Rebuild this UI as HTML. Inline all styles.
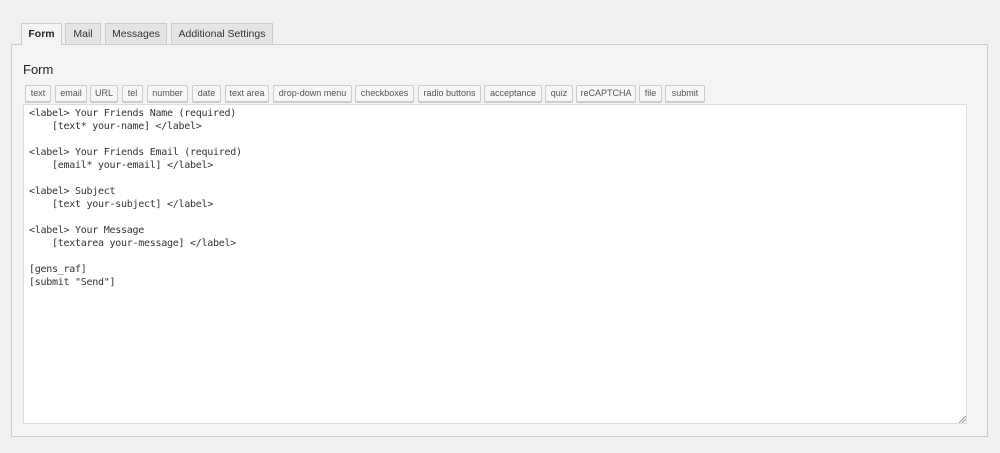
<!DOCTYPE html>
<html><head><style>
body{margin:0;width:1000px;height:453px;background:#f1f1f1;font-family:"Liberation Sans",sans-serif;position:relative;overflow:hidden}
.tab{position:absolute;top:23px;height:21px;box-sizing:border-box;border:1px solid #ccc;border-bottom:none;background:#e4e4e4;font-size:10.5px;color:#333;text-align:center;line-height:20px}
.tab.a{background:#f4f4f4;font-weight:bold;height:22px;z-index:2;color:#222}
.panel{position:absolute;left:11px;top:44px;width:977px;height:393px;box-sizing:border-box;border:1px solid #ccc;background:#f4f4f4}
h2{position:absolute;left:23px;top:62px;margin:0;font-weight:normal;font-size:13px;color:#222}
.b{position:absolute;top:85px;height:17px;box-sizing:border-box;border:1px solid #ccc;border-radius:2px;background:#f7f7f7;font-size:9px;color:#555;text-align:center;line-height:15px;box-shadow:0 1px 0 #ccc}
.ta{position:absolute;left:23px;top:104px;width:944px;height:320px;box-sizing:border-box;border:1px solid #ddd;background:#fff}
pre{margin:0;position:absolute;left:29px;top:107px;font-family:"DejaVu Sans Mono",monospace;font-size:10px;letter-spacing:-0.27px;line-height:13px;color:#333}
</style></head><body>
<div class="panel"></div>
<div class="tab a" style="left:21px;width:41px">Form</div>
<div class="tab" style="left:65px;width:36px">Mail</div>
<div class="tab" style="left:105px;width:62px">Messages</div>
<div class="tab" style="left:171px;width:102px">Additional Settings</div>
<h2>Form</h2>
<div class="b" style="left:25px;width:26px">text</div>
<div class="b" style="left:55px;width:32px">email</div>
<div class="b" style="left:90px;width:28px">URL</div>
<div class="b" style="left:122px;width:21px">tel</div>
<div class="b" style="left:147px;width:41px">number</div>
<div class="b" style="left:192px;width:29px">date</div>
<div class="b" style="left:225px;width:44px">text area</div>
<div class="b" style="left:273px;width:79px">drop-down menu</div>
<div class="b" style="left:355px;width:59px">checkboxes</div>
<div class="b" style="left:418px;width:63px">radio buttons</div>
<div class="b" style="left:484px;width:58px">acceptance</div>
<div class="b" style="left:545px;width:28px">quiz</div>
<div class="b" style="left:576px;width:60px">reCAPTCHA</div>
<div class="b" style="left:639px;width:23px">file</div>
<div class="b" style="left:665px;width:40px">submit</div>
<div class="ta"></div>
<pre>&lt;label&gt; Your Friends Name (required)
    [text* your-name] &lt;/label&gt;

&lt;label&gt; Your Friends Email (required)
    [email* your-email] &lt;/label&gt;

&lt;label&gt; Subject
    [text your-subject] &lt;/label&gt;

&lt;label&gt; Your Message
    [textarea your-message] &lt;/label&gt;

[gens_raf]
[submit "Send"]</pre>
<svg style="position:absolute;left:959px;top:416px" width="7" height="7"><path d="M0 7L7 0M3 7L7 3" stroke="#999" stroke-width="1"/></svg>
</body></html>
